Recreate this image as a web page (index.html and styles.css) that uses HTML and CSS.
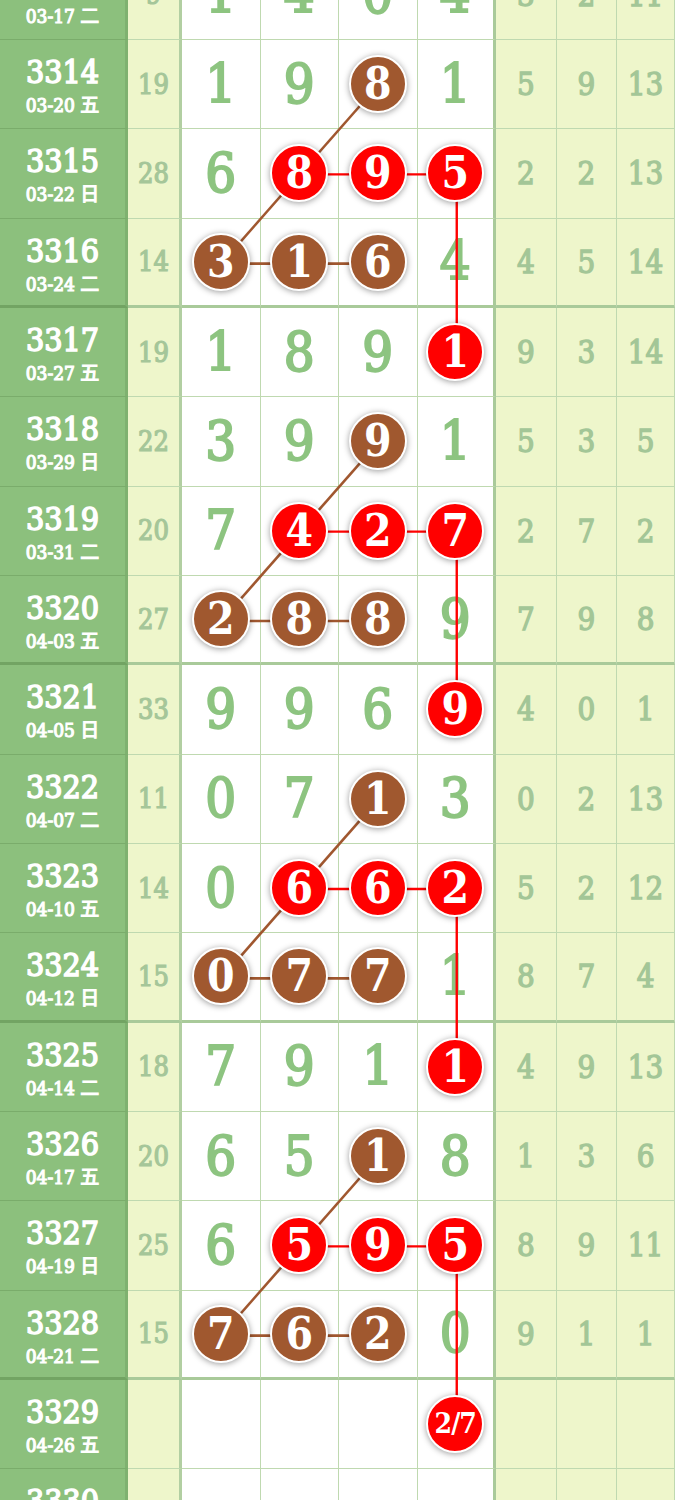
FILE: index.html
```html
<!DOCTYPE html>
<html lang="zh">
<head>
<meta charset="utf-8">
<title>走势图</title>
<link rel="stylesheet" href="styles.css">
</head>
<body>
<div class="chart">
  <div class="row">
    <div class="c0"><span class="no">3313</span><span class="dt">03-17 二</span></div>
    <div class="c1">9</div>
    <div class="d">1</div><div class="d">4</div><div class="d">0</div><div class="d">4</div>
    <div class="s">3</div><div class="s">2</div><div class="s">11</div>
  </div>
  <div class="row">
    <div class="c0"><span class="no">3314</span><span class="dt">03-20 五</span></div>
    <div class="c1">19</div>
    <div class="d">1</div><div class="d">9</div><div class="d"><span class="ball br">8</span></div><div class="d">1</div>
    <div class="s">5</div><div class="s">9</div><div class="s">13</div>
  </div>
  <div class="row">
    <div class="c0"><span class="no">3315</span><span class="dt">03-22 日</span></div>
    <div class="c1">28</div>
    <div class="d">6</div><div class="d"><span class="ball rd">8</span></div><div class="d"><span class="ball rd">9</span></div><div class="d"><span class="ball rd">5</span></div>
    <div class="s">2</div><div class="s">2</div><div class="s">13</div>
  </div>
  <div class="row g">
    <div class="c0"><span class="no">3316</span><span class="dt">03-24 二</span></div>
    <div class="c1">14</div>
    <div class="d"><span class="ball br">3</span></div><div class="d"><span class="ball br">1</span></div><div class="d"><span class="ball br">6</span></div><div class="d">4</div>
    <div class="s">4</div><div class="s">5</div><div class="s">14</div>
  </div>
  <div class="row">
    <div class="c0"><span class="no">3317</span><span class="dt">03-27 五</span></div>
    <div class="c1">19</div>
    <div class="d">1</div><div class="d">8</div><div class="d">9</div><div class="d"><span class="ball rd">1</span></div>
    <div class="s">9</div><div class="s">3</div><div class="s">14</div>
  </div>
  <div class="row">
    <div class="c0"><span class="no">3318</span><span class="dt">03-29 日</span></div>
    <div class="c1">22</div>
    <div class="d">3</div><div class="d">9</div><div class="d"><span class="ball br">9</span></div><div class="d">1</div>
    <div class="s">5</div><div class="s">3</div><div class="s">5</div>
  </div>
  <div class="row">
    <div class="c0"><span class="no">3319</span><span class="dt">03-31 二</span></div>
    <div class="c1">20</div>
    <div class="d">7</div><div class="d"><span class="ball rd">4</span></div><div class="d"><span class="ball rd">2</span></div><div class="d"><span class="ball rd">7</span></div>
    <div class="s">2</div><div class="s">7</div><div class="s">2</div>
  </div>
  <div class="row g">
    <div class="c0"><span class="no">3320</span><span class="dt">04-03 五</span></div>
    <div class="c1">27</div>
    <div class="d"><span class="ball br">2</span></div><div class="d"><span class="ball br">8</span></div><div class="d"><span class="ball br">8</span></div><div class="d">9</div>
    <div class="s">7</div><div class="s">9</div><div class="s">8</div>
  </div>
  <div class="row">
    <div class="c0"><span class="no">3321</span><span class="dt">04-05 日</span></div>
    <div class="c1">33</div>
    <div class="d">9</div><div class="d">9</div><div class="d">6</div><div class="d"><span class="ball rd">9</span></div>
    <div class="s">4</div><div class="s">0</div><div class="s">1</div>
  </div>
  <div class="row">
    <div class="c0"><span class="no">3322</span><span class="dt">04-07 二</span></div>
    <div class="c1">11</div>
    <div class="d">0</div><div class="d">7</div><div class="d"><span class="ball br">1</span></div><div class="d">3</div>
    <div class="s">0</div><div class="s">2</div><div class="s">13</div>
  </div>
  <div class="row">
    <div class="c0"><span class="no">3323</span><span class="dt">04-10 五</span></div>
    <div class="c1">14</div>
    <div class="d">0</div><div class="d"><span class="ball rd">6</span></div><div class="d"><span class="ball rd">6</span></div><div class="d"><span class="ball rd">2</span></div>
    <div class="s">5</div><div class="s">2</div><div class="s">12</div>
  </div>
  <div class="row g">
    <div class="c0"><span class="no">3324</span><span class="dt">04-12 日</span></div>
    <div class="c1">15</div>
    <div class="d"><span class="ball br">0</span></div><div class="d"><span class="ball br">7</span></div><div class="d"><span class="ball br">7</span></div><div class="d">1</div>
    <div class="s">8</div><div class="s">7</div><div class="s">4</div>
  </div>
  <div class="row">
    <div class="c0"><span class="no">3325</span><span class="dt">04-14 二</span></div>
    <div class="c1">18</div>
    <div class="d">7</div><div class="d">9</div><div class="d">1</div><div class="d"><span class="ball rd">1</span></div>
    <div class="s">4</div><div class="s">9</div><div class="s">13</div>
  </div>
  <div class="row">
    <div class="c0"><span class="no">3326</span><span class="dt">04-17 五</span></div>
    <div class="c1">20</div>
    <div class="d">6</div><div class="d">5</div><div class="d"><span class="ball br">1</span></div><div class="d">8</div>
    <div class="s">1</div><div class="s">3</div><div class="s">6</div>
  </div>
  <div class="row">
    <div class="c0"><span class="no">3327</span><span class="dt">04-19 日</span></div>
    <div class="c1">25</div>
    <div class="d">6</div><div class="d"><span class="ball rd">5</span></div><div class="d"><span class="ball rd">9</span></div><div class="d"><span class="ball rd">5</span></div>
    <div class="s">8</div><div class="s">9</div><div class="s">11</div>
  </div>
  <div class="row g">
    <div class="c0"><span class="no">3328</span><span class="dt">04-21 二</span></div>
    <div class="c1">15</div>
    <div class="d"><span class="ball br">7</span></div><div class="d"><span class="ball br">6</span></div><div class="d"><span class="ball br">2</span></div><div class="d">0</div>
    <div class="s">9</div><div class="s">1</div><div class="s">1</div>
  </div>
  <div class="row">
    <div class="c0"><span class="no">3329</span><span class="dt">04-26 五</span></div>
    <div class="c1"></div>
    <div class="d"></div><div class="d"></div><div class="d"></div><div class="d"><span class="ball rd small">2/7</span></div>
    <div class="s"></div><div class="s"></div><div class="s"></div>
  </div>
  <div class="row">
    <div class="c0"><span class="no">3330</span><span class="dt">04-28 日</span></div>
    <div class="c1"></div>
    <div class="d"></div><div class="d"></div><div class="d"></div><div class="d"></div>
    <div class="s"></div><div class="s"></div><div class="s"></div>
  </div>

  <svg class="lines" width="675" height="1608" viewBox="0 0 675 1608" aria-hidden="true">
    <g stroke="#a0572f" stroke-width="2.6" fill="none">
      <line x1="378.25" y1="134" x2="221.25" y2="312.67"/>
      <line x1="378.25" y1="491.33" x2="221.25" y2="670"/>
      <line x1="378.25" y1="848.67" x2="221.25" y2="1027.33"/>
      <line x1="378.25" y1="1206" x2="221.25" y2="1384.67"/>
      <line x1="221.25" y1="312.67" x2="378.25" y2="312.67"/>
      <line x1="221.25" y1="670" x2="378.25" y2="670"/>
      <line x1="221.25" y1="1027.33" x2="378.25" y2="1027.33"/>
      <line x1="221.25" y1="1384.67" x2="378.25" y2="1384.67"/>
    </g>
    <g stroke="#ff0000" stroke-width="2.4" fill="none">
      <line x1="299.75" y1="223.33" x2="456.75" y2="223.33"/>
      <line x1="299.75" y1="580.67" x2="456.75" y2="580.67"/>
      <line x1="299.75" y1="938" x2="456.75" y2="938"/>
      <line x1="299.75" y1="1295.33" x2="456.75" y2="1295.33"/>
      <line x1="456.75" y1="223.33" x2="456.75" y2="402"/>
      <line x1="456.75" y1="580.67" x2="456.75" y2="759.33"/>
      <line x1="456.75" y1="938" x2="456.75" y2="1116.67"/>
      <line x1="456.75" y1="1295.33" x2="456.75" y2="1474"/>
    </g>
  </svg>
</div>
</body>
</html>
```

FILE: styles.css
```css
html, body {
  margin: 0;
  padding: 0;
  background: #ffffff;
}
body {
  width: 675px;
  height: 1500px;
  overflow: hidden;
  font-family: "DejaVu Serif Condensed", "DejaVu Serif", "Noto Sans CJK SC", serif;
  font-stretch: condensed;
}
.chart {
  position: relative;
  width: 675px;
  margin-top: -49.333px;
}
.row {
  display: grid;
  grid-template-columns: 128px 54px 78.5px 78.5px 78.5px 78.5px 60.5px 60.5px 58px;
  height: 89.333px;
}
.row > div {
  box-sizing: border-box;
  border-bottom: 1px solid #bfd9b0;
  border-right: 1px solid #bfd9b0;
  display: flex;
  align-items: center;
  justify-content: center;
}
.row.g > div {
  border-bottom: 3px solid #a9ca9a;
}
.row > .c0 {
  background: #8cc07d;
  border-right: 3px solid #7fb170;
  border-bottom-color: #7aac6b;
  flex-direction: column;
  justify-content: flex-start;
  padding-top: 15px;
  color: #ffffff;
}
.row.g > .c0 {
  border-bottom-color: #72a463;
}
.no {
  font-size: 32px;
  line-height: 34px;
  font-weight: 400;
  -webkit-text-stroke: 1.5px #ffffff;
}
.dt {
  font-size: 19px;
  line-height: 32px;
  font-weight: 400;
  -webkit-text-stroke: 1.1px #ffffff;
}
.row > .c1 {
  background: #eef6cb;
  border-right: 3px solid #b2cfa2;
  color: #a5c699;
  font-size: 27px;
  font-weight: 400;
  -webkit-text-stroke: 1.2px #a5c699;
}
.row > .d {
  background: #ffffff;
  color: #8dc480;
  font-size: 54px;
  font-weight: 400;
  -webkit-text-stroke: 2px #8dc480;
}
.row > .d:nth-child(6) {
  border-right: 3px solid #a9ca9a;
}
.row > .s {
  background: #eef6cb;
  color: #a3c697;
  font-size: 31px;
  font-weight: 400;
  -webkit-text-stroke: 1.3px #a3c697;
}
.ball {
  position: relative;
  z-index: 2;
  box-sizing: border-box;
  width: 58px;
  height: 58px;
  border-radius: 50%;
  border: 2.5px solid #ffffff;
  box-shadow: 0 1px 6px rgba(0, 0, 0, 0.4);
  color: #ffffff;
  font-size: 44px;
  font-weight: 700;
  -webkit-text-stroke: 0;
  display: flex;
  align-items: center;
  justify-content: center;
  line-height: 1;
}
.ball.br {
  background: #a0582f;
}
.ball.rd {
  background: #ff0000;
}
.ball.small {
  font-size: 28px;
  letter-spacing: -1px;
}
.lines {
  position: absolute;
  top: 0;
  left: 0;
  z-index: 1;
  pointer-events: none;
}
```
